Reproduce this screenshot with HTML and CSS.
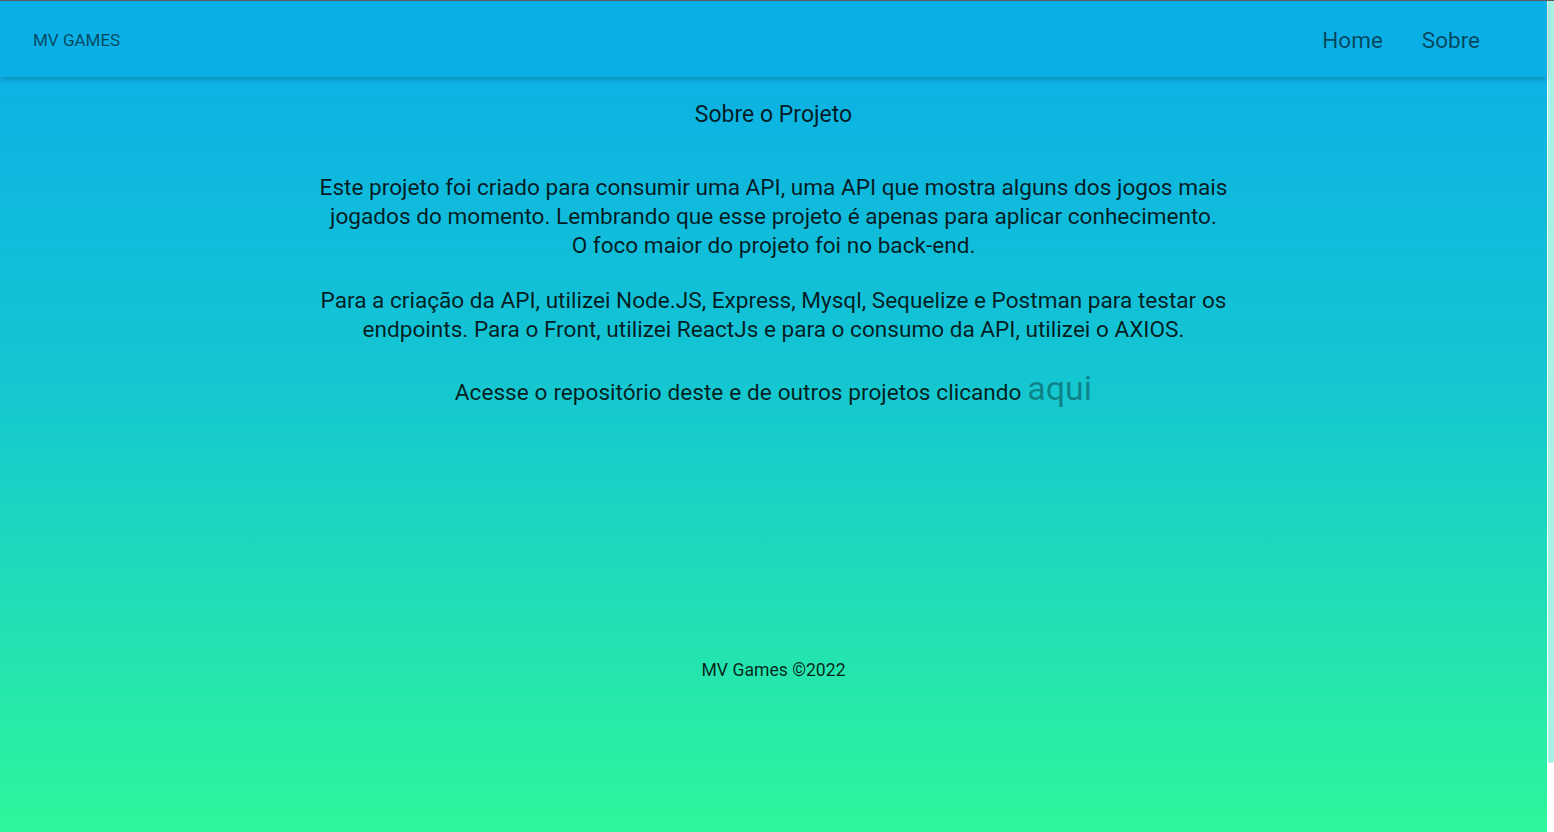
FILE: index.html
```html
<!DOCTYPE html>
<html lang="pt-BR">
<head>
<meta charset="utf-8">
<title>MV Games - Sobre</title>
<link rel="stylesheet" href="styles.css">
</head>
<body>
<div class="page">
  <header class="topbar">
    <a class="brand" href="#">MV GAMES</a>
    <nav class="nav">
      <a class="nav-link" href="#">Home</a>
      <a class="nav-link" href="#">Sobre</a>
    </nav>
  </header>
  <main class="about">
    <h1 class="about-title">Sobre o Projeto</h1>
    <p class="about-text">Este projeto foi criado para consumir uma API, uma API que mostra alguns dos jogos mais<br>jogados do momento. Lembrando que esse projeto é apenas para aplicar conhecimento.<br>O foco maior do projeto foi no back-end.</p>
    <p class="about-text">Para a criação da API, utilizei Node.JS, Express, Mysql, Sequelize e Postman para testar os<br>endpoints. Para o Front, utilizei ReactJs e para o consumo da API, utilizei o AXIOS.</p>
    <p class="about-text about-link-line">Acesse o repositório deste e de outros projetos clicando <a class="repo-link" href="#">aqui</a></p>
  </main>
  <footer class="footer">MV Games ©2022</footer>
</div>
<div class="scrollbar" aria-hidden="true"><div class="scrollbar-thumb"></div></div>
</body>
</html>
```
FILE: styles.css
```css
html, body {
  height: 100%;
  overflow: hidden;
}
body {
  margin: 0;
  display: flex;
  background: #ffffff;
  font-family: "Roboto", "Liberation Sans", sans-serif;
  color: rgba(0, 0, 0, 0.85);
  border-top: 1px solid #5b5b5b;
  box-sizing: border-box;
}
.page {
  flex: 1;
  min-width: 0;
  height: 831px;
  background: linear-gradient(180deg, #0aade9 0%, #14c6d2 45%, #2df79b 100%);
  display: flex;
  flex-direction: column;
}
.scrollbar {
  width: 7px;
  height: 831px;
  background: #ffffff;
  display: flex;
  flex-direction: column;
}
.scrollbar-thumb {
  height: 762px;
  margin-left: 1px;
  background: #a6f1e4;
  border-radius: 0 0 2px 2px;
}
.topbar {
  flex: none;
  height: 76px;
  background: #0aafe6;
  box-shadow: 0 2px 5px rgba(0, 0, 0, 0.22);
  display: flex;
  align-items: center;
  justify-content: space-between;
  padding: 2px 67px 0 33px;
  box-sizing: border-box;
  position: relative;
  z-index: 1;
}
.brand {
  font-size: 17px;
  color: rgba(0, 0, 0, 0.6);
  text-decoration: none;
}
.nav {
  display: flex;
  gap: 39px;
}
.nav-link {
  font-size: 22.5px;
  color: rgba(0, 0, 0, 0.6);
  text-decoration: none;
}
.about {
  display: flex;
  flex-direction: column;
  align-items: center;
  text-align: center;
  padding-top: 24px;
}
.about-title {
  margin: 0 0 44px;
  font-size: 23px;
  font-weight: 400;
  line-height: 28px;
}
.about-text {
  margin: 0 0 26px;
  font-size: 22.6px;
  line-height: 29px;
}
.about-link-line {
  line-height: 40px;
  margin-top: -2px;
  word-spacing: 0.3px;
}
.repo-link {
  font-size: 34px;
  color: rgba(0, 0, 0, 0.35);
  text-decoration: none;
}
.footer {
  margin-top: 221px;
  text-align: center;
  font-size: 17.6px;
}
```
